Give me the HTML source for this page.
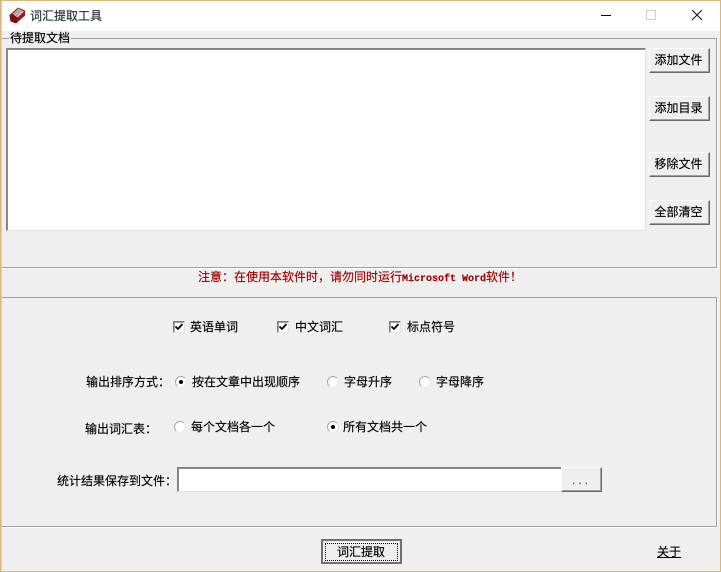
<!DOCTYPE html>
<html lang="zh">
<head>
<meta charset="utf-8">
<title>词汇提取工具</title>
<style>
html,body{margin:0;padding:0;width:721px;height:572px;overflow:hidden;background:#efefef}
body{position:relative;font-family:"Liberation Sans","WenQuanYi Zen Hei","Noto Sans CJK SC",sans-serif;font-size:12px;color:#000;-webkit-text-stroke:.15px currentColor}
div,span{position:absolute;box-sizing:border-box}
.t{white-space:nowrap;line-height:14px;height:14px}
.btn{background:#efefef;border:1px solid;border-color:#fff #696969 #696969 #fff;box-shadow:inset -1px -1px 0 #a0a0a0;text-align:center;line-height:22px;white-space:nowrap;padding-right:2px}
.group{border:1px solid #a0a0a0;box-shadow:1px 1px 0 #fff}
.input{background:#fff;border:1px solid;border-color:#808080 #e3e3e3 #e3e3e3 #808080;box-shadow:inset 1px 1px 0 #8c8c8c}
.cb{width:12px;height:12px;background:#fff;border:1px solid;border-color:#808080 #e3e3e3 #e3e3e3 #808080;box-shadow:inset 1px 1px 0 #a0a0a0}
.rb{width:12px;height:12px;border-radius:50%;background:#fff;border:1px solid #a8a8a8;border-right-color:#e6e6e6;border-bottom-color:#e6e6e6}
.rb.on::after{content:"";position:absolute;left:3px;top:3px;width:4px;height:4px;border-radius:50%;background:#000}
</style>
</head>
<body>
<!-- title bar -->
<div style="left:0;top:0;width:721px;height:31px;background:#fff"></div>
<svg style="position:absolute;left:9px;top:7px" width="17" height="17" viewBox="0 0 17 17">
<path d="M0.500 8 L9 0.500 L16 3.500 L16 8.500 L7 16.500 L1.500 14.500 Z" fill="#a81414"/>
<path d="M3.500 7 L9.500 1.500 L15 4.500 L8.500 10.500 Z" fill="#cfcbc8"/>
<path d="M5 7.500 L10.500 2.500 M7 9 L12.500 3.800" stroke="#858585" stroke-width="1"/>
<path d="M0.500 8.500 L3.500 7 L8.500 10.500 L7.500 16 L1.500 14 Z" fill="#7f0d0d"/>
</svg>
<div class="t" style="left:30px;top:9px;color:#1f2a36;font-size:12px">词汇提取工具</div>
<!-- window controls -->
<div style="left:601px;top:15px;width:10px;height:1px;background:#000"></div>
<div style="left:646px;top:10px;width:10px;height:10px;border:1px solid #cfcfcf"></div>
<svg style="position:absolute;left:691px;top:9px" width="12" height="12" viewBox="0 0 12 12"><path d="M1 1 L11 11 M11 1 L1 11" stroke="#111" stroke-width="1" fill="none"/></svg>

<!-- group 1 -->
<div class="group" style="left:1px;top:38px;width:716px;height:230px"></div>
<div class="t" style="left:9px;top:31px;background:#efefef;padding:0 1px;width:62px;overflow:hidden">待提取文档</div>
<div class="input" style="left:6px;top:48px;width:640px;height:183px"></div>
<div class="btn" style="left:649px;top:48px;width:61px;height:25px">添加文件</div>
<div class="btn" style="left:649px;top:96px;width:61px;height:25px">添加目录</div>
<div class="btn" style="left:649px;top:152px;width:61px;height:25px">移除文件</div>
<div class="btn" style="left:649px;top:200px;width:61px;height:25px">全部清空</div>

<!-- notice -->
<div class="t" style="left:198px;top:270px;color:#a00000">注意：在使用本软件时，请勿同时运行<span style="position:static;font-family:'Liberation Mono',monospace;font-size:10px;font-weight:bold">Microsoft Word</span>软件！</div>

<!-- group 2 -->
<div class="group" style="left:1px;top:297px;width:716px;height:230px"></div>

<div class="cb" style="left:173px;top:321px"></div>
<svg style="position:absolute;left:174px;top:322px" width="10" height="10" viewBox="0 0 10 10"><path d="M1.500 4.500 L4 7 L8.500 2" stroke="#000" stroke-width="1.800" fill="none"/></svg>
<div class="t" style="left:190px;top:320px">英语单词</div>
<div class="cb" style="left:277px;top:321px"></div>
<svg style="position:absolute;left:278px;top:322px" width="10" height="10" viewBox="0 0 10 10"><path d="M1.500 4.500 L4 7 L8.500 2" stroke="#000" stroke-width="1.800" fill="none"/></svg>
<div class="t" style="left:295px;top:320px">中文词汇</div>
<div class="cb" style="left:389px;top:321px"></div>
<svg style="position:absolute;left:390px;top:322px" width="10" height="10" viewBox="0 0 10 10"><path d="M1.500 4.500 L4 7 L8.500 2" stroke="#000" stroke-width="1.800" fill="none"/></svg>
<div class="t" style="left:407px;top:320px">标点符号</div>

<div class="t" style="left:86px;top:375px">输出排序方式：</div>
<div class="rb on" style="left:175px;top:376px"></div>
<div class="t" style="left:192px;top:375px">按在文章中出现顺序</div>
<div class="rb" style="left:327px;top:376px"></div>
<div class="t" style="left:344px;top:375px">字母升序</div>
<div class="rb" style="left:419px;top:376px"></div>
<div class="t" style="left:436px;top:375px">字母降序</div>

<div class="t" style="left:85px;top:422px">输出词汇表：</div>
<div class="rb" style="left:174px;top:421px"></div>
<div class="t" style="left:191px;top:420px">每个文档各一个</div>
<div class="rb on" style="left:327px;top:421px"></div>
<div class="t" style="left:343px;top:420px">所有文档共一个</div>

<div class="t" style="left:57px;top:474px">统计结果保存到文件：</div>
<div class="input" style="left:177px;top:467px;width:385px;height:25px"></div>
<div class="btn" style="left:561px;top:467px;width:41px;height:25px;line-height:25px;color:#555;letter-spacing:3px;padding:0">...</div>

<!-- bottom -->
<div style="left:321px;top:539px;width:81px;height:25px;background:#efefef;border:2px solid #707070"></div>
<div style="left:325px;top:543px;width:73px;height:18px;border:1px dotted #000"></div>
<div class="t" style="left:337px;top:545px">词汇提取</div>
<div class="t" style="left:657px;top:545px;text-decoration:underline">关于</div>

<!-- window frame -->
<div style="left:0;top:0;width:721px;height:572px;border:1px solid #dcb67a;z-index:5"></div>
<div style="left:1px;top:1px;width:1px;height:570px;background:#e8cfa6;z-index:4"></div>
</body>
</html>
